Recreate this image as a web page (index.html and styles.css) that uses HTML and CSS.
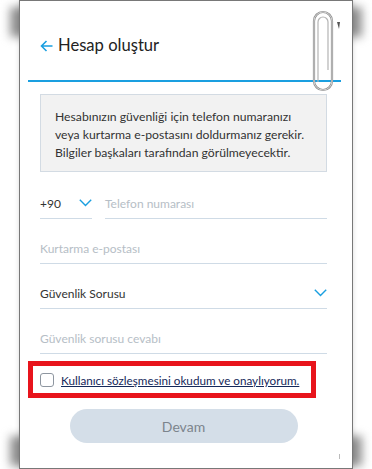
FILE: index.html
```html
<!DOCTYPE html>
<html>
	<head>
		<meta charset="utf-8">
		<link rel="stylesheet" href="styles.css">
	</head>
	<body>
		<div class="sheet">
			<svg class="clip" width="36" height="86" viewBox="0 0 36 86">
				<rect x="6" y="4" width="18" height="78" rx="9" fill="none" stroke="#8c8c8c" stroke-width="2.2"/>
				<rect x="6" y="4" width="18" height="78" rx="9" fill="none" stroke="#e4e4e4" stroke-width="0.8"/>
				<path d="M10 74 L10 14 A5 5 0 0 1 20 14 L20 62" fill="none" stroke="#b4b4b4" stroke-width="1.2"/>
				<polygon points="29,14 32,14 31,21" fill="#555"/>
			</svg>

			<div class="head">
				<svg class="back" width="13" height="12" viewBox="0 0 13 12">
					<path d="M12.5 6 H1.5 M6.5 1 L1.5 6 L6.5 11" fill="none" stroke="#1a9fe0" stroke-width="1.6"/>
				</svg>
				<span class="title">Hesap oluştur</span>
			</div>

			<div class="content">
				<div class="notice">
					Hesabınızın güvenliği için telefon numaranızı<br>
					veya kurtarma e-postasını doldurmanız gerekir.<br>
					Bilgiler başkaları tarafından görülmeyecektir.
				</div>

				<div class="phone-row">
					<div class="field country">
						<span class="value">+90</span>
						<svg class="chevron" width="13" height="8" viewBox="0 0 13 8"><path d="M0.8 0.8 L6.5 6.5 L12.2 0.8" fill="none" stroke="#1a9fe0" stroke-width="1.4"/></svg>
					</div>
					<div class="field grow"><span class="hint">Telefon numarası</span></div>
				</div>

				<div class="field"><span class="hint">Kurtarma e-postası</span></div>

				<div class="field">
					<span class="value">Güvenlik Sorusu</span>
					<svg class="chevron" width="13" height="8" viewBox="0 0 13 8"><path d="M0.8 0.8 L6.5 6.5 L12.2 0.8" fill="none" stroke="#1a9fe0" stroke-width="1.4"/></svg>
				</div>

				<div class="field"><span class="hint">Güvenlik sorusu cevabı</span></div>

				<div class="agree">
					<span class="box"></span>
					<a class="terms" href="#">Kullanıcı sözleşmesini okudum ve onaylıyorum.</a>
				</div>

				<div class="actions">
					<button class="next">Devam</button>
				</div>
			</div>
			<span class="tick"></span>
		</div>
	</body>
</html>
```

FILE: styles.css
```css
body {
	margin: 0;
	background: #fff;
	font-family: Lato, "Noto Sans", sans-serif;
	color: #333;
}
.sheet {
	position: relative;
	margin-left: 19px;
	width: 332px;
	height: 467px;
	border: 1px solid #787878;
	background: #fff;
	box-shadow: 0 0 5px rgba(0, 0, 0, 0.15);
}
.sheet::before,
.sheet::after {
	content: "";
	position: absolute;
	left: -10px;
	right: -10px;
	height: 30px;
	background: #909090;
	filter: blur(5px);
	z-index: -1;
}
.sheet::before {
	top: 6px;
}
.sheet::after {
	bottom: 2px;
}
.clip {
	position: absolute;
	left: 288px;
	top: 7px;
}
.tick {
	position: absolute;
	left: 319px;
	top: 453px;
	width: 1px;
	height: 5px;
	background: #bbb;
}
.head {
	display: flex;
	align-items: center;
	height: 71px;
	margin: 0 11px 0 8px;
	padding-left: 12px;
	padding-top: 8px;
	border-bottom: 2px solid #1a9fe0;
}
.back {
	margin-right: 5px;
	margin-top: 3px;
}
.title {
	font-size: 16.6px;
	color: #222;
}
.content {
	padding: 0 25px 0 20px;
}
.notice {
	margin-top: 12px;
	height: 55px;
	padding: 13px 14px 8px;
	background: #f2f2f2;
	border: 1px solid #d3dbe3;
	font-size: 12.2px;
	line-height: 18px;
	color: #333;
}
.phone-row {
	display: flex;
	gap: 13px;
	margin-top: 2px;
}
.field {
	display: flex;
	align-items: flex-end;
	justify-content: space-between;
	height: 39px;
	padding-bottom: 5px;
	border-bottom: 1px solid #cfdbe6;
	font-size: 12px;
	line-height: 18px;
}
.country {
	width: 52px;
}
.grow {
	flex: 1;
}
.value {
	color: #333;
}
.hint {
	color: #b6bec6;
}
.chevron {
	margin-bottom: 6px;
}
.agree {
	display: flex;
	align-items: center;
	gap: 7px;
	margin: 7px 11px 0 -12px;
	height: 27px;
	padding-left: 7px;
	border: 5px solid #e8141c;
	white-space: nowrap;
}
.box {
	flex: none;
	width: 12px;
	height: 12px;
	border: 1px solid #8e96a0;
	border-radius: 3px;
}
.terms {
	font-size: 11.7px;
	color: #14285a;
}
.actions {
	display: flex;
	justify-content: center;
	margin-top: 11px;
}
.next {
	width: 228px;
	height: 34px;
	border: none;
	border-radius: 17px;
	background: #d4dee8;
	color: #7c848c;
	font-family: inherit;
	font-size: 14px;
}
```
